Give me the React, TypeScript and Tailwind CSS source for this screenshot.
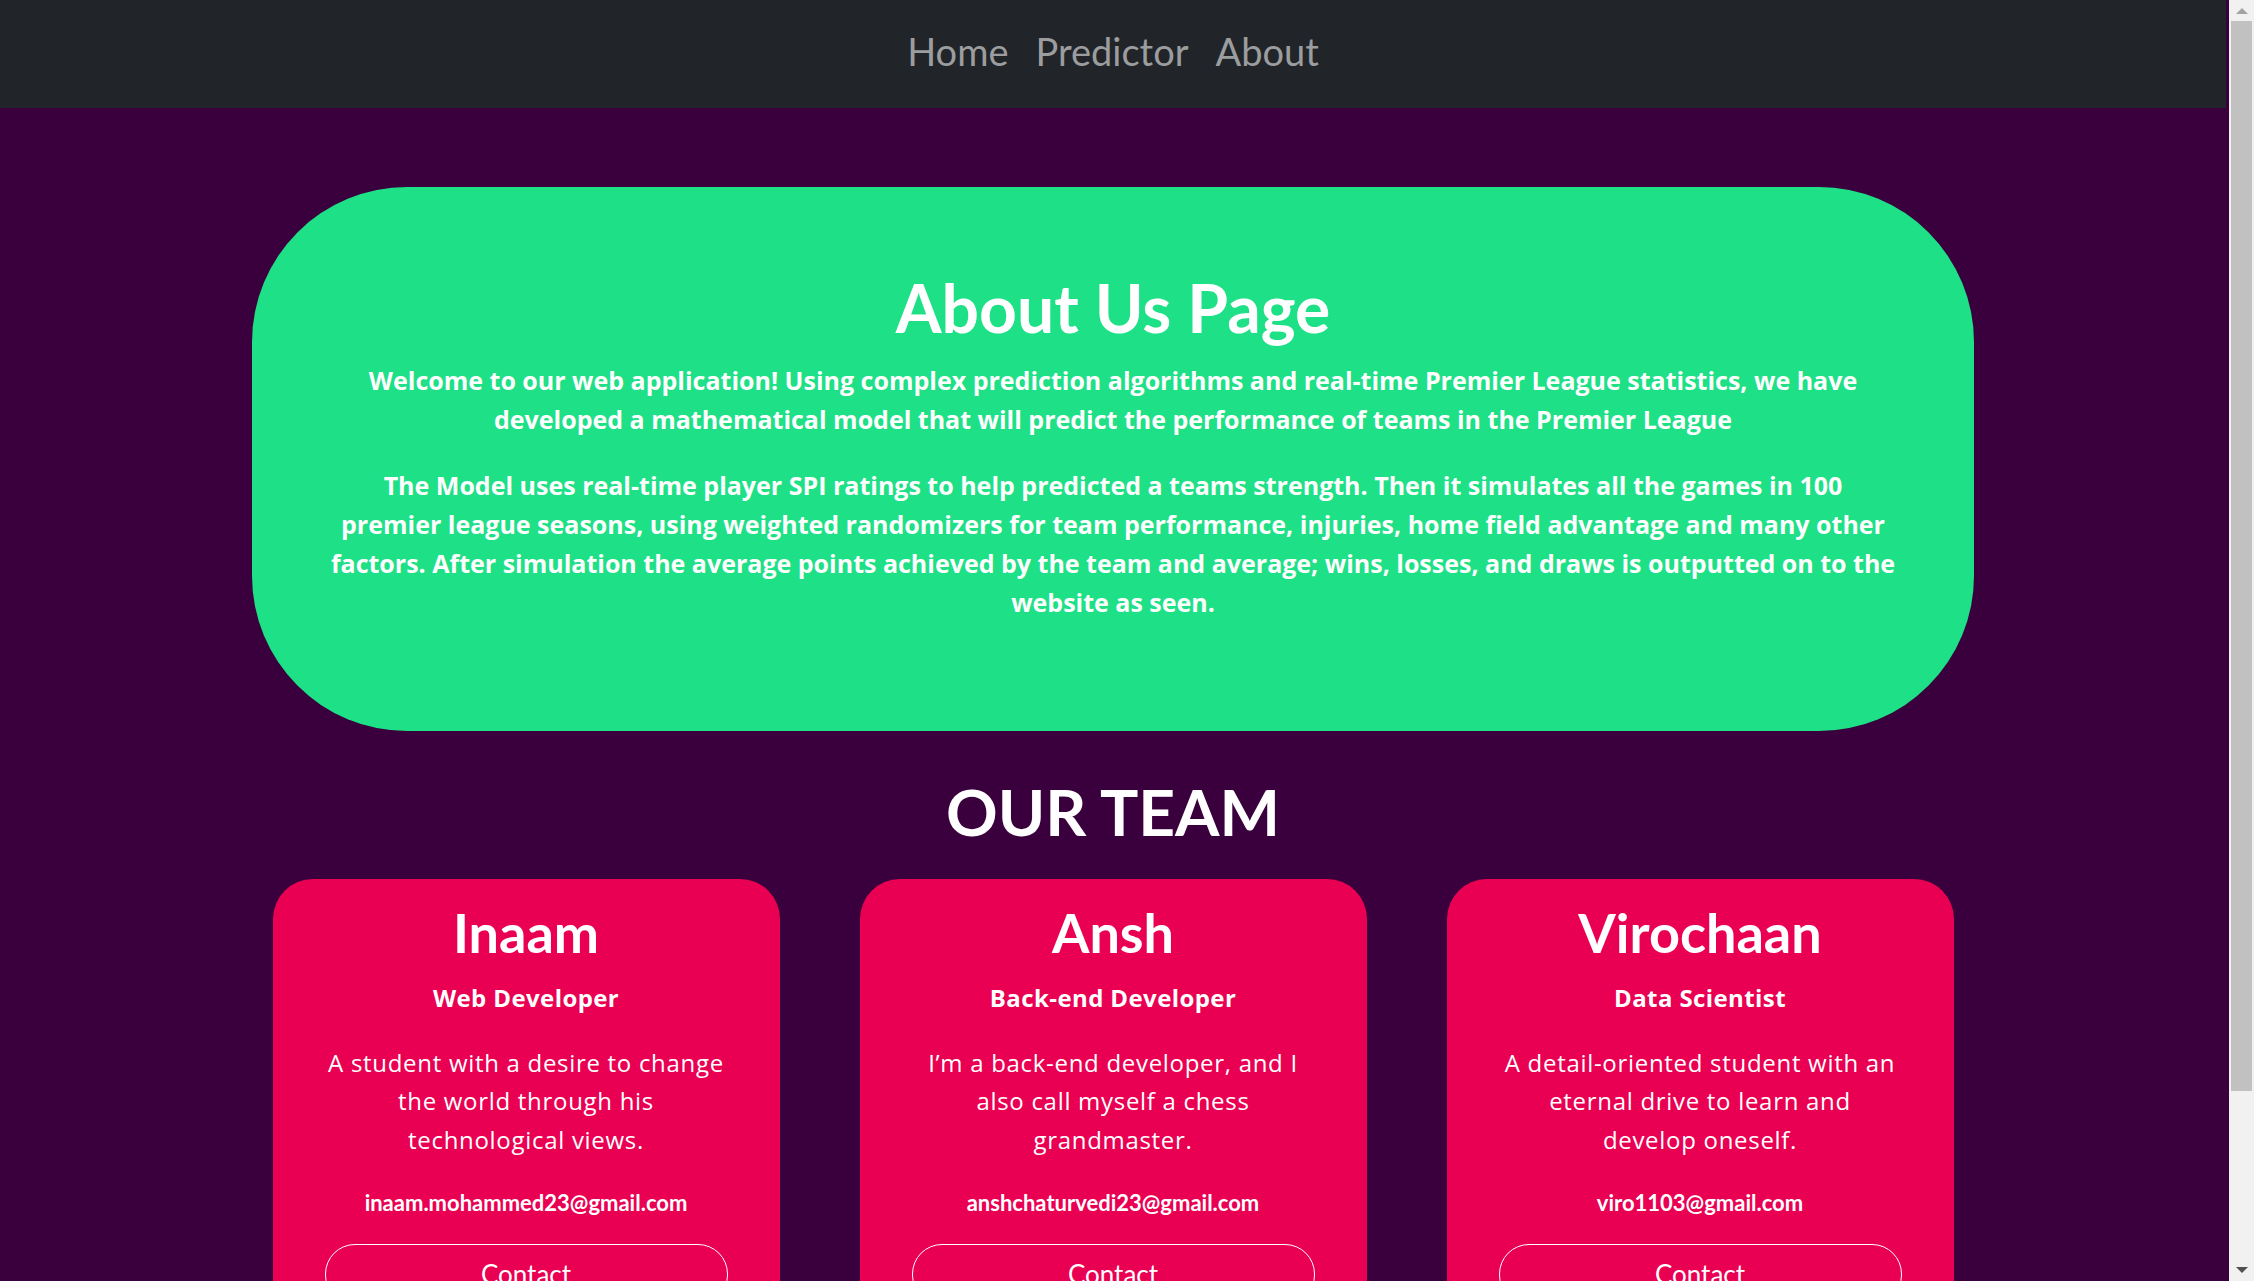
const team = [
  {
    name: 'Inaam',
    role: 'Web Developer',
    bio: ['A student with a desire to change', 'the world through his', 'technological views.'],
    email: 'inaam.mohammed23@gmail.com',
  },
  {
    name: 'Ansh',
    role: 'Back-end Developer',
    bio: ['I’m a back-end developer, and I', 'also call myself a chess', 'grandmaster.'],
    email: 'anshchaturvedi23@gmail.com',
  },
  {
    name: 'Virochaan',
    role: 'Data Scientist',
    bio: ['A detail-oriented student with an', 'eternal drive to learn and', 'develop oneself.'],
    email: 'viro1103@gmail.com',
  },
]

function Scrollbar() {
  return (
    <aside className="flex w-[25px] shrink-0 flex-col bg-[#f1f1f1]">
      <div className="flex h-[21px] items-center justify-center">
        <svg width="12" height="6" viewBox="0 0 12 6">
          <path d="M0 6 L6 0 L12 6 Z" fill="#a3a3a3" />
        </svg>
      </div>
      <div className="mx-[2px] h-[1070px] bg-[#c1c1c1]" />
      <div className="flex-1" />
      <div className="flex h-[17px] items-start justify-center pt-[3px]">
        <svg width="12" height="6" viewBox="0 0 12 6">
          <path d="M0 0 L12 0 L6 6 Z" fill="#505050" />
        </svg>
      </div>
    </aside>
  )
}

export default function App() {
  return (
    <div className="flex h-screen bg-[#3a003d] text-white">
      <div className="flex-1 overflow-y-auto pr-[3px] font-['Lato',sans-serif]">
        <nav className="flex h-[108px] items-center justify-center gap-[27px] bg-[#212529] pb-[6px] text-[38px] text-[#9b9d9f]">
          <a href="#">Home</a>
          <a href="#">Predictor</a>
          <a href="#">About</a>
        </nav>

        <main className="pb-[120px]">
          <section className="mx-auto mt-[79px] w-[1722px] rounded-[155px] bg-[#1ee086] px-[40px] pt-[81px] pb-[109px] text-center">
            <h1 className="mb-[14px] text-[66px] leading-[1.2] font-bold">About Us Page</h1>
            <p className="mb-[27px] font-['Open_Sans',sans-serif] text-[25px] leading-[39px] font-bold">
              Welcome to our web application! Using complex prediction algorithms and real-time Premier League
              statistics, we have
              <br />
              developed a mathematical model that will predict the performance of teams in the Premier League
            </p>
            <p className="font-['Open_Sans',sans-serif] text-[25px] leading-[39px] font-bold">
              The Model uses real-time player SPI ratings to help predicted a teams strength. Then it simulates all the
              games in 100
              <br />
              premier league seasons, using weighted randomizers for team performance, injuries, home field advantage
              and many other
              <br />
              factors. After simulation the average points achieved by the team and average; wins, losses, and draws
              is outputted on to the
              <br />
              website as seen.
            </p>
          </section>

          <h2 className="mt-[43px] text-center text-[64px] leading-[1.2] font-bold">OUR TEAM</h2>

          <div className="mx-auto mt-[28px] grid w-[1681px] grid-cols-3 gap-[80px]">
            {team.map((m) => (
              <div key={m.name} className="rounded-[40px] bg-[#ea0052] px-[40px] pt-[22px] pb-[40px] text-center">
                <h3 className="text-[54px] leading-[1.2] font-bold">{m.name}</h3>
                <p className="mt-[18px] font-['Open_Sans',sans-serif] text-[24px] leading-[1.2] tracking-[0.4px] font-bold">
                  {m.role}
                </p>
                <p className="mt-[31px] font-['Open_Sans',sans-serif] text-[24px] leading-[38.5px] tracking-[0.7px]">
                  {m.bio.map((line) => (
                    <span key={line} className="block">
                      {line}
                    </span>
                  ))}
                </p>
                <p className="mt-[27px] text-[22px] leading-[1.5] font-bold">{m.email}</p>
                <button className="mx-auto mt-[25px] block w-[403px] rounded-[30px] border border-white px-4 py-[10px] text-[26px] leading-[1.5]">
                  Contact
                </button>
              </div>
            ))}
          </div>
        </main>
      </div>
      <Scrollbar />
    </div>
  )
}
